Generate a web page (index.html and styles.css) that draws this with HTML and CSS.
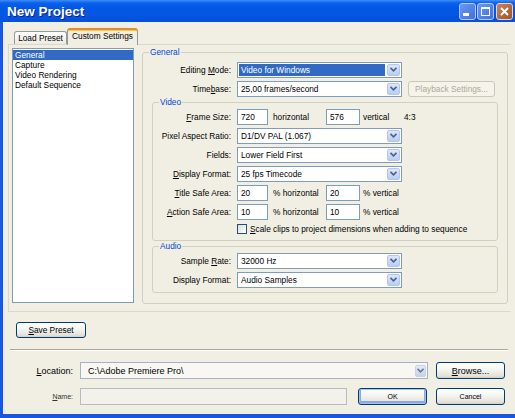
FILE: index.html
```html
<!DOCTYPE html>
<html lang="en">
<head>
    <meta charset="UTF-8">
    <title>New Project</title>
    <link rel="stylesheet" href="styles.css">
</head>
<body>
<div class="window">
    <div class="titlebar">
        <span class="title">New Project</span>
        <div class="caption-buttons">
            <span class="cap min"><svg width="15" height="15" viewBox="0 0 15 15"><rect x="3" y="9" width="6" height="3" fill="#fff"/></svg></span>
            <span class="cap max"><svg width="15" height="15" viewBox="0 0 15 15"><rect x="3.5" y="3.5" width="8" height="8" fill="none" stroke="#fff"/><rect x="3" y="3" width="9" height="2" fill="#fff"/></svg></span>
            <span class="cap close"><svg width="15" height="15" viewBox="0 0 15 15"><path d="M4 4 L11 11 M11 4 L4 11" stroke="#fff" stroke-width="2"/></svg></span>
        </div>
    </div>
    <div class="frame">
        <div class="tabs">
            <span class="tab">Load Preset</span>
            <span class="tab active">Custom Settings</span>
        </div>
        <div class="tab-panel">
            <ul class="nav-list">
                <li class="selected">General</li>
                <li>Capture</li>
                <li>Video Rendering</li>
                <li>Default Sequence</li>
            </ul>
            <fieldset class="group general">
                <legend>General</legend>
                <div class="row">
                    <label class="lbl">Editing <u>M</u>ode:</label>
                    <div class="combo focus"><span class="value">Video for Windows</span><span class="arrow"><svg width="7" height="5" viewBox="0 0 7 5"><path d="M0.5 0.8 L3.5 3.8 L6.5 0.8" fill="none" stroke="#4d6185" stroke-width="1.6"/></svg></span></div>
                </div>
                <div class="row">
                    <label class="lbl">Time<u>b</u>ase:</label>
                    <div class="combo"><span class="value">25,00 frames/second</span><span class="arrow"><svg width="7" height="5" viewBox="0 0 7 5"><path d="M0.5 0.8 L3.5 3.8 L6.5 0.8" fill="none" stroke="#4d6185" stroke-width="1.6"/></svg></span></div>
                    <button class="btn btn-playback" disabled>Playback Settings...</button>
                </div>

                <fieldset class="group sub video">
                    <legend>Video</legend>
                    <div class="row">
                        <label class="lbl"><u>F</u>rame Size:</label>
                        <input class="field narrow" value="720">
                        <span class="unit">horizontal</span>
                        <input class="field wide" value="576">
                        <span class="unit unit-v">vertical</span>
                        <span>4:3</span>
                    </div>
                    <div class="row">
                        <label class="lbl">Pixel Aspect Ratio:</label>
                        <div class="combo"><span class="value">D1/DV PAL (1.067)</span><span class="arrow"><svg width="7" height="5" viewBox="0 0 7 5"><path d="M0.5 0.8 L3.5 3.8 L6.5 0.8" fill="none" stroke="#4d6185" stroke-width="1.6"/></svg></span></div>
                    </div>
                    <div class="row">
                        <label class="lbl">Fields:</label>
                        <div class="combo"><span class="value">Lower Field First</span><span class="arrow"><svg width="7" height="5" viewBox="0 0 7 5"><path d="M0.5 0.8 L3.5 3.8 L6.5 0.8" fill="none" stroke="#4d6185" stroke-width="1.6"/></svg></span></div>
                    </div>
                    <div class="row">
                        <label class="lbl"><u>D</u>isplay Format:</label>
                        <div class="combo"><span class="value">25 fps Timecode</span><span class="arrow"><svg width="7" height="5" viewBox="0 0 7 5"><path d="M0.5 0.8 L3.5 3.8 L6.5 0.8" fill="none" stroke="#4d6185" stroke-width="1.6"/></svg></span></div>
                    </div>
                    <div class="row">
                        <label class="lbl"><u>T</u>itle Safe Area:</label>
                        <input class="field narrow" value="20">
                        <span class="unit">% horizontal</span>
                        <input class="field wide" value="20">
                        <span class="unit unit-v">% vertical</span>
                    </div>
                    <div class="row">
                        <label class="lbl"><u>A</u>ction Safe Area:</label>
                        <input class="field narrow" value="10">
                        <span class="unit">% horizontal</span>
                        <input class="field wide" value="10">
                        <span class="unit unit-v">% vertical</span>
                    </div>
                    <div class="row check-row">
                        <span class="check"></span>
                        <span><u>S</u>cale clips to project dimensions when adding to sequence</span>
                    </div>
                </fieldset>

                <fieldset class="group sub audio">
                    <legend>Audio</legend>
                    <div class="row">
                        <label class="lbl">Sample <u>R</u>ate:</label>
                        <div class="combo"><span class="value">32000 Hz</span><span class="arrow"><svg width="7" height="5" viewBox="0 0 7 5"><path d="M0.5 0.8 L3.5 3.8 L6.5 0.8" fill="none" stroke="#4d6185" stroke-width="1.6"/></svg></span></div>
                    </div>
                    <div class="row">
                        <label class="lbl">Display Format:</label>
                        <div class="combo"><span class="value">Audio Samples</span><span class="arrow"><svg width="7" height="5" viewBox="0 0 7 5"><path d="M0.5 0.8 L3.5 3.8 L6.5 0.8" fill="none" stroke="#4d6185" stroke-width="1.6"/></svg></span></div>
                    </div>
                </fieldset>
            </fieldset>
        </div>

        <div class="save-row">
            <button class="btn btn-save"><u>S</u>ave Preset</button>
        </div>
        <div class="separator"></div>

        <div class="bottom-row loc-row">
            <label class="lbl"><u>L</u>ocation:</label>
            <div class="combo location"><span class="value">C:\Adobe Premiere Pro\</span><span class="arrow"><svg width="7" height="5" viewBox="0 0 7 5"><path d="M0.5 0.8 L3.5 3.8 L6.5 0.8" fill="none" stroke="#6a7a98" stroke-width="1.6"/></svg></span></div>
            <button class="btn btn-browse"><u>B</u>rowse...</button>
        </div>
        <div class="bottom-row name-row">
            <label class="lbl small"><u>N</u>ame:</label>
            <input class="field name-field" value="">
            <button class="btn btn-ok small">OK</button>
            <button class="btn btn-cancel small">Cancel</button>
        </div>
    </div>
</div>
</body>
</html>
```

FILE: styles.css
```css
* {
    box-sizing: border-box;
}

body {
    margin: 0;
    overflow: hidden;
    background: #fff;
    color: #000;
    font-family: "Liberation Sans", Arial, sans-serif;
    font-size: 8.3px;
}

u {
    text-decoration: underline;
    text-underline-offset: 1px;
}

.window {
    width: 519px;
    height: 418px;
    display: flex;
    flex-direction: column;
}

/* title bar */
.titlebar {
    height: 22px;
    flex: none;
    display: flex;
    align-items: center;
    justify-content: space-between;
    padding: 0 6px 0 7px;
    background: linear-gradient(#3d8ef7 0, #0c60ea 3px, #0058e6 8px, #0457e2 60%, #0750d8 100%);
}

.title {
    color: #fff;
    font-size: 13.5px;
    font-weight: bold;
    text-shadow: 1px 1px #0a1f8a;
}

.caption-buttons {
    display: flex;
    gap: 1px;
}

.cap {
    width: 17px;
    height: 17px;
    border: 1px solid #b9cdf3;
    border-radius: 3px;
    display: flex;
    align-items: center;
    justify-content: center;
    background: linear-gradient(135deg, #6a99ef, #3f70df);
}

.cap.close {
    margin-left: 1px;
    border-color: #e6d6cb;
    background: linear-gradient(135deg, #c8825c, #a0552f);
}

/* dialog body */
.frame {
    flex: 1;
    background: #f1efe3;
    border: solid #1956e2;
    border-width: 0 4px 4px 3px;
    padding: 6px 0 0 5px;
}

.tabs {
    display: flex;
    align-items: flex-end;
    margin-left: 6px;
}

.tab {
    height: 13px;
    line-height: 12px;
    text-align: center;
    border: 1px solid #919b9c;
    border-bottom: none;
    border-radius: 3px 3px 0 0;
    background: linear-gradient(#fff, #ebeae3);
    width: 53px;
}

.tab.active {
    position: relative;
    width: 71px;
    height: 17px;
    margin-bottom: -1px;
    line-height: 13px;
    border-top: 2px solid #e68b2c;
    box-shadow: inset 0 1px #ffc83c;
    background: #f1efe3;
}

.tab-panel {
    width: 503px;
    height: 268px;
    border: 1px solid #dcd9cc;
    border-right-color: #f1efe3;
    display: flex;
    align-items: flex-start;
    gap: 8px;
    padding: 3px 0 0 3px;
}

.nav-list {
    list-style: none;
    margin: 0;
    padding: 1px 0 0;
    width: 122px;
    height: 255px;
    background: #fff;
    border: 1px solid #7f9db9;
}

.nav-list li {
    height: 10px;
    line-height: 10px;
    padding-left: 2px;
}

.nav-list li.selected {
    background: #316ac5;
    color: #fff;
}

/* group boxes */
.group {
    margin: 0;
    min-width: 0;
    border: 1px solid #d0d0bf;
    border-radius: 3px;
}

.group legend {
    color: #0046d5;
    padding: 0 1px;
    margin-left: 6px;
    line-height: 9px;
}

.general {
    width: 366px;
    margin-top: -1px;
    padding: 3px 9px 10px 0;
}

.general > legend {
    line-height: 10px;
}

.sub {
    margin-left: 9px;
    padding: 0 0 3px;
}

.audio {
    margin-top: 1px;
}

.row {
    display: flex;
    align-items: center;
    height: 19px;
}

.lbl {
    flex: none;
    text-align: right;
    padding-right: 6px;
    width: 94px;
}

.sub .lbl {
    width: 84px;
}

.check-row {
    height: 16px;
    padding-left: 84px;
}

.check {
    width: 10px;
    height: 10px;
    margin-right: 3px;
    border: 1px solid #1c5180;
    background: linear-gradient(135deg, #dcdcd7, #fff);
}

/* controls */
.combo {
    width: 165px;
    height: 16px;
    flex: none;
    display: flex;
    align-items: center;
    padding: 1px;
    border: 1px solid #7f9db9;
    background: #fff;
}

.combo .value {
    flex: 1;
    height: 12px;
    line-height: 12px;
    padding-left: 2px;
    white-space: nowrap;
}

.combo.focus .value {
    background: #316ac5;
    color: #fff;
    margin-right: 2px;
}

.combo .arrow {
    width: 13px;
    height: 12px;
    display: flex;
    align-items: center;
    justify-content: center;
    border: 1px solid #b4c6ef;
    border-radius: 2px;
    background: linear-gradient(#dde7fc, #b8ccf8);
}

.field {
    height: 16px;
    flex: none;
    padding: 0 3px;
    border: 1px solid #7f9db9;
    background: #fff;
    font: inherit;
    color: #000;
}

.field.narrow {
    width: 31px;
}

.field.wide {
    width: 34px;
}

.unit {
    width: 58px;
    padding-left: 5px;
    flex: none;
}

.unit-v {
    width: 44px;
    padding-left: 3px;
}

.btn {
    height: 17px;
    padding: 0;
    border: 1px solid #003c74;
    border-radius: 3px;
    background: linear-gradient(#fff, #f4f4f0 45%, #e4e2da 85%, #d6d0c5);
    font: inherit;
    color: #000;
    text-align: center;
}

.btn-playback {
    width: 87px;
    height: 16px;
    margin-left: 6px;
    border-color: #c9c7ba;
    background: #f5f4ea;
    color: #aca899;
}

.save-row {
    margin: 10px 0 0 8px;
}

.btn-save {
    width: 70px;
    height: 16px;
}

.separator {
    width: 498px;
    margin: 11px 0 0 2px;
    border-top: 1px solid #aca899;
    border-bottom: 1px solid #fff;
}

.bottom-row {
    display: flex;
    align-items: center;
    height: 17px;
    margin-left: 3px;
}

.loc-row {
    margin-top: 11px;
}

.name-row {
    margin-top: 9px;
}

.bottom-row .lbl {
    width: 69px;
    padding-right: 7px;
    font-size: 9px;
}

.bottom-row .lbl.small {
    font-size: 7px;
    color: #333;
}

.combo.location {
    width: 348px;
    height: 17px;
    border-color: #a7b2c2;
    background: #f8f7f2;
}

.combo.location .value {
    font-size: 9px;
    padding-left: 6px;
}

.combo.location .arrow {
    width: 11px;
    border-color: #c9d2e2;
    background: linear-gradient(#e4eaf5, #c8d3e8);
}

.btn-browse {
    width: 69px;
    margin-left: 8px;
    font-size: 9px;
}

.name-field {
    width: 267px;
    height: 17px;
    border-color: #b6bcc4;
    background: #f3f2ea;
}

.btn.small {
    font-size: 7px;
}

.btn-ok {
    width: 69px;
    margin-left: 11px;
    box-shadow: inset 0 0 0 1px #a9c0ea, inset 0 -1px 0 2px #89a9e2;
}

.btn-cancel {
    width: 69px;
    margin-left: 9px;
}
```
